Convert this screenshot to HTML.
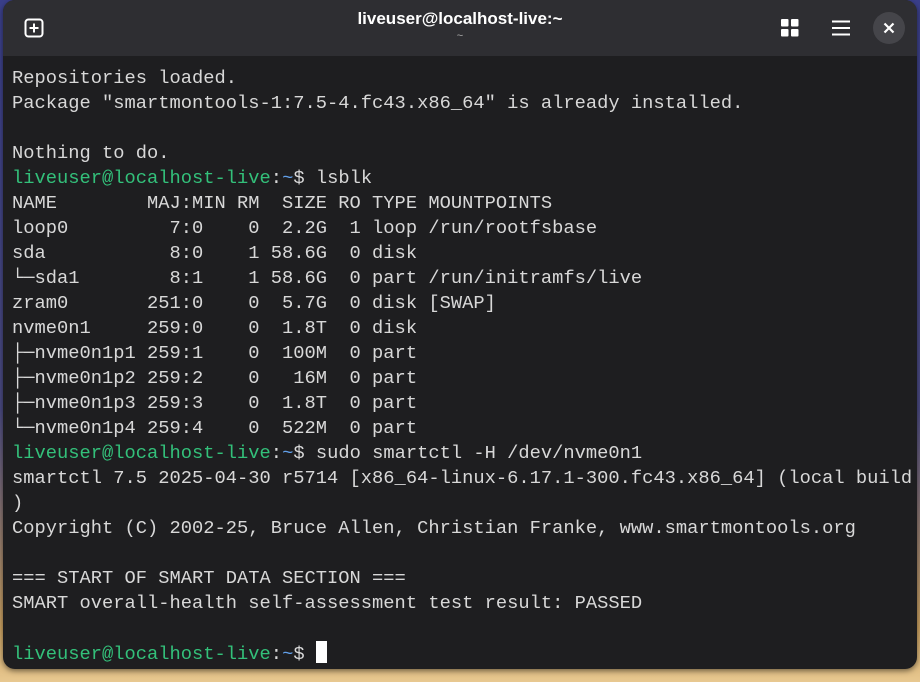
<!DOCTYPE html>
<html><head><style>
html,body{margin:0;width:920px;height:682px;overflow:hidden;}
body{background:linear-gradient(180deg,#3a3f8a 0%,#4a4a80 60%,#c9a060 92%,#e8c890 100%);position:relative;}
.win{position:absolute;left:3px;top:0;width:914px;height:669px;background:#1e1e20;border-radius:12px;overflow:hidden;box-shadow:0 2px 6px rgba(0,0,0,.5);}
.hdr{height:56px;background:#2e2e32;position:relative;color:#fff;font-family:"Liberation Sans",sans-serif;}
.title{position:absolute;left:0;right:0;top:9px;text-align:center;font-weight:bold;font-size:17px;}
.sub{position:absolute;left:0;right:0;top:30px;text-align:center;font-size:11px;color:#aaa;}
pre{margin:0;position:absolute;left:9px;top:66px;font-family:"Liberation Mono",monospace;font-size:18.75px;line-height:25px;color:#d8d8d8;white-space:pre;}
.g{color:#33c07a;}
.b{color:#62a0ea;}
.cur{display:inline-block;width:11px;height:22px;background:#fff;vertical-align:-4px;}
.close{position:absolute;left:870px;top:12px;width:32px;height:32px;border-radius:50%;background:#45454a;}
</style></head><body>
<div class="win">
<div class="hdr">
<svg style="position:absolute;left:21px;top:18px" width="20" height="20" viewBox="0 0 20 20"><rect x="1.5" y="1.5" width="17" height="17" rx="3" fill="none" stroke="#fff" stroke-width="2"/><path d="M10 5.5v9M5.5 10h9" stroke="#fff" stroke-width="2"/></svg>
<div class="title">liveuser@localhost-live:~</div>
<div class="sub">~</div>
<svg style="position:absolute;left:778px;top:19px" width="18" height="18" viewBox="0 0 18 18"><rect x="0" y="0" width="7.5" height="7.5" rx="1" fill="#fff"/><rect x="10" y="0" width="7.5" height="7.5" rx="1" fill="#fff"/><rect x="0" y="10" width="7.5" height="7.5" rx="1" fill="#fff"/><rect x="10" y="10" width="7.5" height="7.5" rx="1" fill="#fff"/></svg>
<svg style="position:absolute;left:829px;top:20px" width="18" height="16" viewBox="0 0 18 16"><path d="M0 1.5h18M0 8h18M0 14.5h18" stroke="#fff" stroke-width="2"/></svg>
<div class="close"><svg style="position:absolute;left:10px;top:10px" width="12" height="12" viewBox="0 0 12 12"><path d="M1.5 1.5l9 9M10.5 1.5l-9 9" stroke="#fff" stroke-width="2.2"/></svg></div>
</div>
<pre>Repositories loaded.
Package "smartmontools-1:7.5-4.fc43.x86_64" is already installed.

Nothing to do.
<span class="g">liveuser@localhost-live</span>:<span class="b">~</span>$ lsblk
NAME        MAJ:MIN RM  SIZE RO TYPE MOUNTPOINTS
loop0         7:0    0  2.2G  1 loop /run/rootfsbase
sda           8:0    1 58.6G  0 disk
└─sda1        8:1    1 58.6G  0 part /run/initramfs/live
zram0       251:0    0  5.7G  0 disk [SWAP]
nvme0n1     259:0    0  1.8T  0 disk
├─nvme0n1p1 259:1    0  100M  0 part
├─nvme0n1p2 259:2    0   16M  0 part
├─nvme0n1p3 259:3    0  1.8T  0 part
└─nvme0n1p4 259:4    0  522M  0 part
<span class="g">liveuser@localhost-live</span>:<span class="b">~</span>$ sudo smartctl -H /dev/nvme0n1
smartctl 7.5 2025-04-30 r5714 [x86_64-linux-6.17.1-300.fc43.x86_64] (local build
)
Copyright (C) 2002-25, Bruce Allen, Christian Franke, www.smartmontools.org

=== START OF SMART DATA SECTION ===
SMART overall-health self-assessment test result: PASSED

<span class="g">liveuser@localhost-live</span>:<span class="b">~</span>$ <span class="cur"></span></pre>
</div>
</body></html>
